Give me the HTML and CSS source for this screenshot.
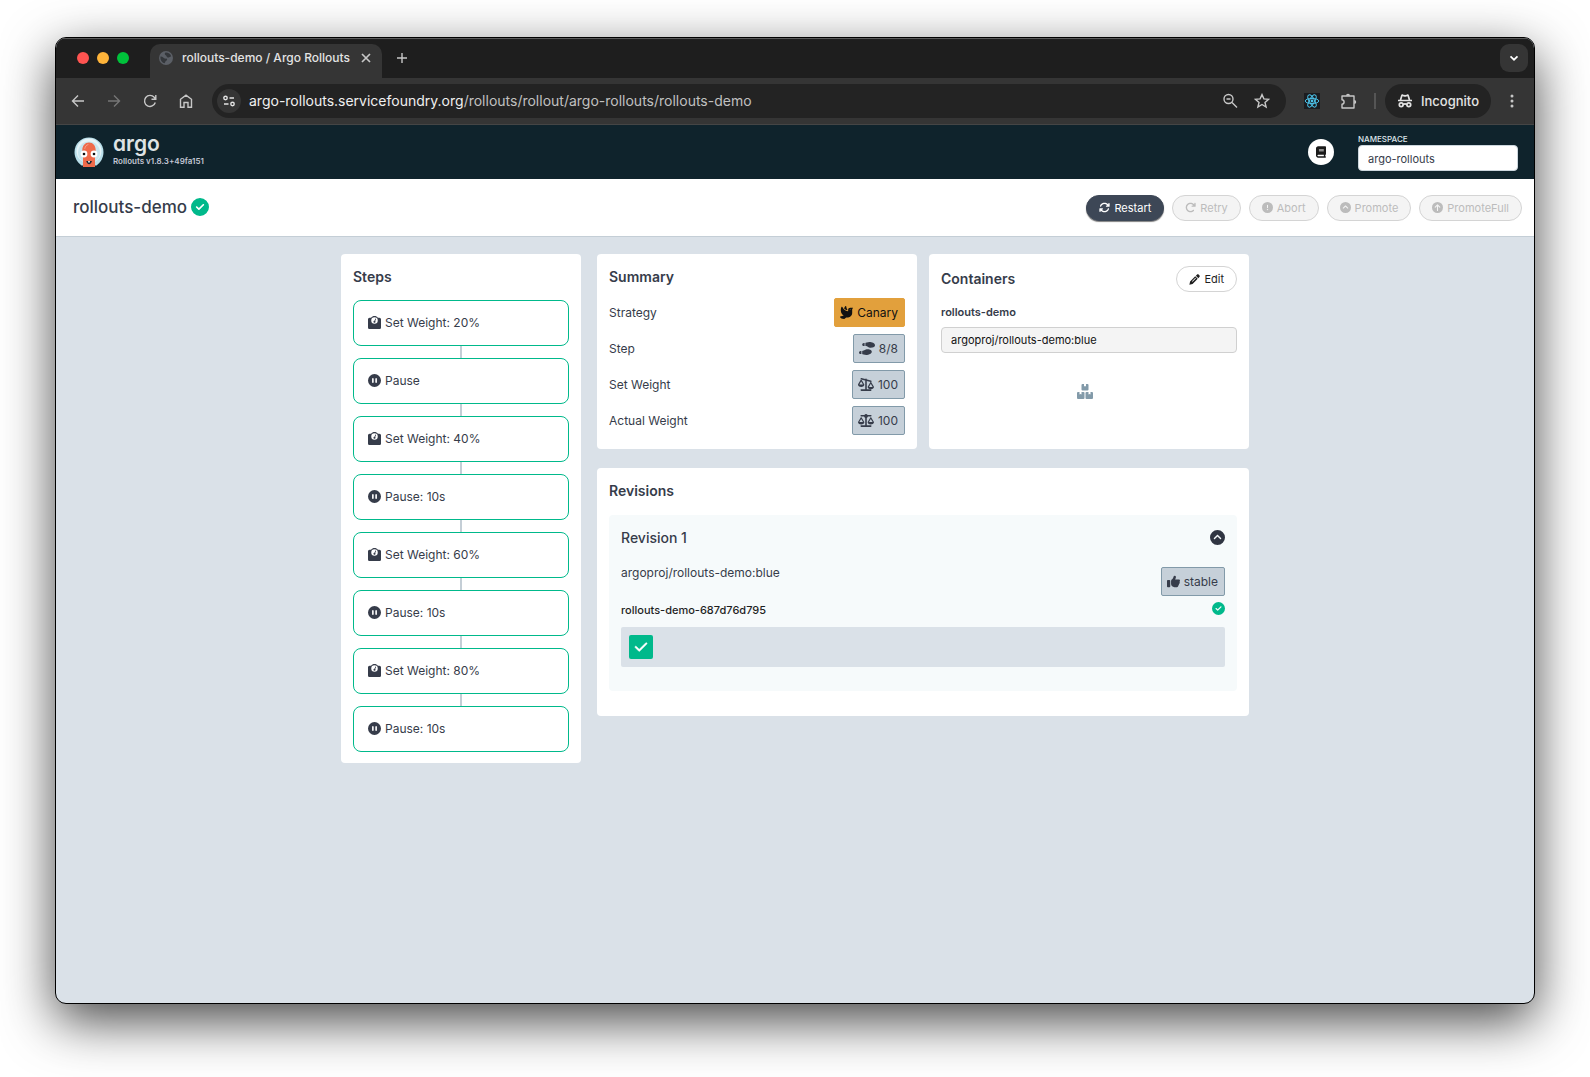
FILE: index.html
```html
<!DOCTYPE html>
<html lang="en">
<head>
    <meta charset="UTF-8">
    <meta name="viewport" content="width=device-width, initial-scale=1.0">
    <title>rollouts-demo / Argo Rollouts</title>
    <link rel="stylesheet" href="styles.css">
</head>
<body>
    <!-- Shared icons -->
    <svg class="sprite" aria-hidden="true">
        <symbol id="i-check-circle" viewBox="0 0 512 512"><path fill-rule="evenodd" d="M256 512A256 256 0 1 0 256 0a256 256 0 1 0 0 512zM369 209L241 337c-9.4 9.4-24.6 9.4-33.9 0l-64-64c-9.4-9.4-9.4-24.6 0-33.9s24.6-9.4 33.9 0l47 47L335 175c9.4-9.4 24.6-9.4 33.9 0s9.4 24.6 0 33.9z"/></symbol>
        <symbol id="i-weight" viewBox="0 0 512 512"><path fill-rule="evenodd" d="M128 176a128 128 0 1 1 256 0 128 128 0 1 1 -256 0zM391.8 64C359.5 24.9 310.7 0 256 0S152.5 24.9 120.2 64H64C28.7 64 0 92.7 0 128V448c0 35.3 28.7 64 64 64H448c35.3 0 64-28.7 64-64V128c0-35.3-28.7-64-64-64H391.8zM296 224c0-10.6-4.1-20.2-10.9-27.4l33.6-78.3c3.5-8.1-.3-17.5-8.4-21s-17.5 .3-21 8.4L255.7 184c-22 .1-39.7 18-39.7 40c0 22.1 17.9 40 40 40s40-17.9 40-40z"/></symbol>
        <symbol id="i-pause" viewBox="0 0 512 512"><path fill-rule="evenodd" d="M256 512A256 256 0 1 0 256 0a256 256 0 1 0 0 512zM224 192V320c0 17.7-14.3 32-32 32s-32-14.3-32-32V192c0-17.7 14.3-32 32-32s32 14.3 32 32zm128 0V320c0 17.7-14.3 32-32 32s-32-14.3-32-32V192c0-17.7 14.3-32 32-32s32 14.3 32 32z"/></symbol>
        <symbol id="i-chevron-circle" viewBox="0 0 512 512"><path fill-rule="evenodd" d="M256 0a256 256 0 1 0 0 512A256 256 0 1 0 256 0zM377 271c9.4 9.4 9.4 24.6 0 33.9s-24.6 9.4-33.9 0l-87-87-87 87c-9.4 9.4-24.6 9.4-33.9 0s-9.4-24.6 0-33.9L239 167c9.4-9.4 24.6-9.4 33.9 0L377 271z"/></symbol>
    </svg>

    <div class="window">
        <div class="tabstrip">
            <div class="lights">
                <span class="light red"></span>
                <span class="light yellow"></span>
                <span class="light green"></span>
            </div>
            <div class="tab">
                <svg class="favicon" viewBox="0 0 14 14"><circle cx="7" cy="7" r="7" fill="#5b5f66"/><path d="M1.500 5.500C4 5.200 4.500 8 7 7.600c1.500-.2 1.500 1.800.2 2.200-1 .4-.8 1.700-1.600 2.400C3 11.600 1 9 1.500 5.500zM6.500 1.600c2.300-.3 5 1.100 5.700 3.600-1.500.8-2.600 1.700-4 1-1-.6-.2-1.500-1.500-1.900-1-.5-1.400-1.900-.2-2.700z" fill="#34373b"/></svg>
                <span class="tab-title">rollouts-demo / Argo Rollouts</span>
                <button class="chrome-btn" aria-label="Close tab"><svg width="10" height="10" viewBox="0 0 10 10"><path d="M1 1l8 8M9 1l-8 8" class="line bold"/></svg></button>
            </div>
            <button class="chrome-btn new-tab" aria-label="New tab"><svg width="12" height="12" viewBox="0 0 12 12"><path d="M6 1v10M1 6h10" class="line"/></svg></button>
            <button class="chrome-btn tab-search" aria-label="Search tabs"><svg width="10" height="10" viewBox="0 0 10 10"><path d="M1.500 3.300L5 6.700l3.500-3.400" class="line bold"/></svg></button>
        </div>

        <div class="toolbar">
            <div class="nav-btns">
                <button class="chrome-btn" aria-label="Back"><svg width="14" height="14" viewBox="0 0 14 14"><path d="M13 7H2M7 1.500L1.500 7 7 12.500" class="line"/></svg></button>
                <button class="chrome-btn dim" aria-label="Forward"><svg width="14" height="14" viewBox="0 0 14 14"><path d="M1 7h11M7 1.500L12.500 7 7 12.500" class="line"/></svg></button>
                <button class="chrome-btn" aria-label="Reload"><svg width="14" height="14" viewBox="0 0 14 14"><path d="M12.300 8.500A5.500 5.500 0 1 1 11.200 3.300L12.600 5M12.800 1v4.300H8.500" class="line"/></svg></button>
                <button class="chrome-btn" aria-label="Home"><svg width="14" height="14" viewBox="0 0 14 14"><path d="M1.500 13.200V5.300L7 1.100l5.500 4.200v7.900H9V8.500H5v4.700z" class="line"/></svg></button>
            </div>
            <div class="omnibox">
                <button class="chrome-btn site-info" aria-label="Site information"><svg width="14" height="12" viewBox="0 0 14 12"><circle cx="3.500" cy="3" r="1.700" class="line"/><path d="M7.500 3H12M2 9h4.500" class="line"/><circle cx="10.500" cy="9" r="1.700" class="line"/></svg></button>
                <div class="url"><span class="host">argo-rollouts.servicefoundry.org</span>/rollouts/rollout/argo-rollouts/rollouts-demo</div>
                <button class="chrome-btn" aria-label="Zoom"><svg width="16" height="16" viewBox="0 0 16 16"><circle cx="6.500" cy="6" r="4.500" class="line"/><path d="M4.500 6h4M10 9.500l5 5" class="line"/></svg></button>
                <button class="chrome-btn" aria-label="Bookmark"><svg width="16" height="16" viewBox="0 0 16 16"><path d="M8 1.600l1.900 4.300 4.700.4-3.600 3.100 1.100 4.600L8 11.500 3.900 14 5 9.400 1.400 6.300l4.700-.4z" class="line"/></svg></button>
            </div>
            <div class="extensions">
                <button class="chrome-btn react" aria-label="React Developer Tools"><svg width="16" height="16" viewBox="0 0 16 16"><rect width="16" height="16" fill="#1b1c20"/><g fill="none" stroke="#4cc3ea"><ellipse cx="8" cy="8" rx="6.800" ry="2.600"/><ellipse cx="8" cy="8" rx="6.800" ry="2.600" transform="rotate(60 8 8)"/><ellipse cx="8" cy="8" rx="6.800" ry="2.600" transform="rotate(120 8 8)"/></g><circle cx="8" cy="8" r="1.400" fill="#4cc3ea"/></svg></button>
                <button class="chrome-btn" aria-label="Extensions"><svg width="17" height="17" viewBox="0 0 17 17"><path d="M2 3H14V15H2V11.300C4.800 11 4.800 7 2 6.700z" class="line" stroke-linejoin="round"/><path d="M6 2.800a2 2 0 0 1 4 0zM14.200 7a2 2 0 0 1 0 4z"/></svg></button>
                <span class="divider"></span>
            </div>
            <button class="incognito"><svg width="16" height="14" viewBox="0 0 16 14"><path d="M3.500 6l1.300-4.300c.2-.6.6-.7 1-.5l1 .4c.8.3 1.600.3 2.400 0l1-.4c.4-.2.800-.1 1 .5L12.500 6M1 6.500h14M6 10.500c1.300-.7 2.700-.7 4 0" class="line bold"/><circle cx="4.200" cy="10.800" r="1.900" class="line bold"/><circle cx="11.800" cy="10.800" r="1.900" class="line bold"/></svg>Incognito</button>
            <button class="chrome-btn menu" aria-label="Menu"><svg width="4" height="14" viewBox="0 0 4 14" fill="#c7c7c7"><circle cx="2" cy="2" r="1.500"/><circle cx="2" cy="7" r="1.500"/><circle cx="2" cy="12" r="1.500"/></svg></button>
        </div>

        <header class="header">
            <a class="brand" href="#">
                <svg class="logo" width="30" height="30" viewBox="0 0 30 30">
                    <path d="M15 .5C23 .5 29.500 6.800 29.500 15c0 6-3 10.500-7 13.500H7.500C3.500 25.500.5 21 .5 15 .5 6.800 7 .5 15 .5z" fill="#b9dfea"/>
                    <circle cx="15" cy="14" r="12.500" fill="#e6f4f8"/>
                    <circle cx="15" cy="15.500" r="11" fill="#c8e6ef"/>
                    <path d="M8.300 13.500C8.300 8.700 11 5.500 15 5.500s6.700 3.200 6.700 8c0 3-.7 5-.7 8V30H9v-8.500c0-3-.7-5-.7-8z" fill="#ef6b4b"/>
                    <path d="M10.800 11.500c.4-2.200 1.600-3.600 3.200-3.900" stroke="#f6a08a" stroke-linecap="round" fill="none"/>
                    <circle cx="10" cy="17" r="3.400" fill="#fff"/><circle cx="20" cy="17" r="3.400" fill="#fff"/>
                    <circle cx="10" cy="17" r="1.300" fill="#111"/><circle cx="20" cy="17" r="1.300" fill="#111"/>
                    <path d="M12.200 24c1.600 4.400 4.200 4.400 5.800 0z" fill="#1c2733"/>
                    <path d="M14.200 24h1.600v1.500h-1.600z" fill="#fff"/>
                </svg>
                <span class="brand-text">
                    <span class="wordmark">argo</span>
                    <span class="version">Rollouts v1.8.3+49fa151</span>
                </span>
            </a>
            <div class="header-right">
                <button class="docs" aria-label="Documentation"><svg width="10" height="12" viewBox="0 0 448 512"><path fill-rule="evenodd" d="M96 0C43 0 0 43 0 96V416c0 53 43 96 96 96H384h32c17.700 0 32-14.300 32-32s-14.300-32-32-32V384c17.700 0 32-14.300 32-32V32c0-17.700-14.300-32-32-32H384 96zm0 384H352v64H96c-17.700 0-32-14.300-32-32s14.300-32 32-32zm32-240c0-8.800 7.200-16 16-16H336c8.800 0 16 7.200 16 16s-7.200 16-16 16H144c-8.800 0-16-7.200-16-16zm16 48H336c8.800 0 16 7.200 16 16s-7.200 16-16 16H144c-8.800 0-16-7.200-16-16s7.200-16 16-16z"/></svg></button>
                <div class="namespace">
                    <label for="namespace">NAMESPACE</label>
                    <input id="namespace" type="text" value="argo-rollouts">
                </div>
            </div>
        </header>

        <div class="subheader">
            <h1>rollouts-demo <svg class="ok" width="18" height="18"><use href="#i-check-circle"/></svg></h1>
            <div class="actions">
                <button class="action primary"><svg width="11" height="11" viewBox="0 0 512 512"><path d="M105.100 202.600c7.700-21.800 20.200-42.300 37.800-59.800c62.500-62.500 163.800-62.500 226.300 0L386.300 160H352c-17.700 0-32 14.300-32 32s14.300 32 32 32H463.900c17.700 0 32-14.300 32-32V80c0-17.700-14.300-32-32-32s-32 14.300-32 32v35.200L414.400 97.600c-87.500-87.500-229.300-87.500-316.800 0C73.200 122 55.600 150.700 44.800 181.400c-5.900 16.700 2.900 34.900 19.500 40.800s34.900-2.900 40.800-19.500zM39 289.300c-5 1.500-9.800 4.200-13.700 8.200c-4 4-6.700 8.800-8.100 14c-.8 3-1.200 6-1.200 8.900V432c0 17.700 14.300 32 32 32s32-14.300 32-32V396.900l17.600 17.500c87.500 87.400 229.300 87.400 316.700 0c24.400-24.400 42.100-53.100 52.900-83.700c5.900-16.700-2.900-34.900-19.500-40.800s-34.900 2.900-40.800 19.500c-7.700 21.800-20.200 42.300-37.800 59.800c-62.500 62.500-163.800 62.500-226.300 0L125.600 352H160c17.700 0 32-14.300 32-32s-14.300-32-32-32H48.400c-3 0-6 .3-9.400 1.300z"/></svg>Restart</button>
                <button class="action" disabled><svg width="11" height="11" viewBox="0 0 512 512"><path d="M386.300 160H336c-17.700 0-32 14.300-32 32s14.300 32 32 32H464c17.700 0 32-14.300 32-32V64c0-17.700-14.300-32-32-32s-32 14.300-32 32v51.200L414.400 97.600c-87.500-87.500-229.300-87.500-316.800 0s-87.500 229.300 0 316.800s229.300 87.500 316.800 0c12.500-12.500 12.500-32.800 0-45.300s-32.800-12.500-45.300 0c-62.500 62.500-163.800 62.500-226.300 0s-62.500-163.800 0-226.300s163.800-62.500 226.300 0L386.300 160z"/></svg>Retry</button>
                <button class="action" disabled><svg width="11" height="11" viewBox="0 0 512 512"><path fill-rule="evenodd" d="M256 512A256 256 0 1 0 256 0a256 256 0 1 0 0 512zm0-384c13.300 0 24 10.700 24 24V264c0 13.300-10.700 24-24 24s-24-10.700-24-24V152c0-13.300 10.700-24 24-24zM224 352a32 32 0 1 1 64 0 32 32 0 1 1 -64 0z"/></svg>Abort</button>
                <button class="action" disabled><svg width="11" height="11"><use href="#i-chevron-circle"/></svg>Promote</button>
                <button class="action" disabled><svg width="11" height="11" viewBox="0 0 512 512"><circle cx="256" cy="256" r="256"/><path d="M256 390V140M150 240l106-106 106 106" fill="none" stroke="#f4f4f4" stroke-width="50" stroke-linecap="round" stroke-linejoin="round"/></svg>PromoteFull</button>
            </div>
        </div>

        <main class="content">
            <section class="card steps">
                <h2>Steps</h2>
                <ol class="step-list">
                    <li class="step"><svg class="icon"><use href="#i-weight"/></svg>Set Weight: 20%</li>
                    <li class="step"><svg class="icon"><use href="#i-pause"/></svg>Pause</li>
                    <li class="step"><svg class="icon"><use href="#i-weight"/></svg>Set Weight: 40%</li>
                    <li class="step"><svg class="icon"><use href="#i-pause"/></svg>Pause: 10s</li>
                    <li class="step"><svg class="icon"><use href="#i-weight"/></svg>Set Weight: 60%</li>
                    <li class="step"><svg class="icon"><use href="#i-pause"/></svg>Pause: 10s</li>
                    <li class="step"><svg class="icon"><use href="#i-weight"/></svg>Set Weight: 80%</li>
                    <li class="step"><svg class="icon"><use href="#i-pause"/></svg>Pause: 10s</li>
                </ol>
            </section>

            <div class="main-col">
                <div class="top-row">
                    <section class="card summary">
                        <h2>Summary</h2>
                        <dl class="info">
                            <div class="info-row">
                                <dt>Strategy</dt>
                                <dd class="badge canary"><svg width="13" height="13" viewBox="0 0 512 512"><path fill-rule="evenodd" d="M160.800 96.500c14 17 31 30.900 49.500 42.200c25.900 15.800 53.700 25.900 77.700 31.600V138.800C265.800 108.500 250 71.500 248.600 28c-.4-11.300-7.500-21.500-18.400-24.400c-7.600-2-15.800-.2-21 5.800c-13.300 15.400-32.700 44.600-48.400 87.200zM320 144v64c-60.800-5.100-185-43.800-219.300-157.200C97.400 40 87.900 32 76.600 32c-7.900 0-15.300 3.900-18.800 11C46.800 65.900 32 112.100 32 176c0 116.900 80.100 180.500 118.400 202.800L11.800 416.600C6.700 418 2.600 421.800 .9 426.800s-.8 10.600 2.300 14.800C21.700 466.200 77.300 512 160 512c3.600 0 7.200-1.200 10-3.500L245.600 448H320c88.400 0 160-71.600 160-160V128l29.900-44.900c1.300-2 2.100-4.400 2.100-6.800c0-6.800-5.500-12.300-12.300-12.300H400c-44.200 0-80 35.800-80 80zm80-16a16 16 0 1 1 0 32 16 16 0 1 1 0-32z"/></svg>Canary</dd>
                            </div>
                            <div class="info-row">
                                <dt>Step</dt>
                                <dd class="badge"><svg width="16" height="13" viewBox="0 0 640 512"><path d="M416 0C352.300 0 256 32 256 32V160c48 0 76 16 104 32s56 32 104 32c56.400 0 176-16 176-96S512 0 416 0zM128 96c0 35.300 28.700 64 64 64h32V32H192c-35.300 0-64 28.700-64 64zM288 512c96 0 224-48 224-128s-119.600-96-176-96c-48 0-76 16-104 32s-56 32-104 32V480s96.300 32 160 32zM0 416c0 35.300 28.700 64 64 64H96V352H64c-35.300 0-64 28.700-64 64z"/></svg>8/8</dd>
                            </div>
                            <div class="info-row">
                                <dt>Set Weight</dt>
                                <dd class="badge"><svg width="16" height="13" viewBox="0 0 640 512"><path d="M320 50V480H512M130 480H320M130 30L512 130" fill="none" stroke="currentColor" stroke-width="62" stroke-linecap="round"/><path fill-rule="evenodd" d="M126.800 132L54.400 256H199.300zM.9 273c-2.600-11 1-22.300 6.700-32.100L102.800 78c5-8.600 14.200-13.800 24.100-13.800s19.100 5.300 24.100 13.800l95.200 163c5.700 9.800 9.300 21.100 6.700 32.100C242 318 189.700 352 126.800 352S11.700 318 .9 273zM512 228l-72.400 124H584.400zM386 369c-2.600-11 1-22.300 6.700-32.100L487.900 174c5-8.600 14.200-13.800 24.100-13.800s19.100 5.300 24.100 13.800l95.200 163c5.700 9.800 9.300 21.100 6.700 32.100C627.200 414 574.900 448 512 448S396.800 414 386 369z"/></svg>100</dd>
                            </div>
                            <div class="info-row">
                                <dt>Actual Weight</dt>
                                <dd class="badge"><svg width="16" height="13" viewBox="0 0 640 512"><path fill-rule="evenodd" d="M384 32H512c17.700 0 32 14.300 32 32s-14.300 32-32 32H398.400c-5.200 25.800-22.900 47.100-46.400 57.300V448H512c17.700 0 32 14.300 32 32s-14.300 32-32 32H128c-17.700 0-32-14.300-32-32s14.300-32 32-32H288V153.300c-23.500-10.300-41.200-31.600-46.400-57.300H128c-17.700 0-32-14.300-32-32s14.300-32 32-32H256c14.600-19.400 37.800-32 64-32s49.400 12.600 64 32zm55.600 288H584.400L512 195.800 439.600 320zM512 416c-62.900 0-115.200-34-126-78.900c-2.600-11 1-22.300 6.700-32.100l95.200-163.200c5-8.600 14.200-13.800 24.100-13.800s19.100 5.300 24.100 13.800l95.200 163.200c5.700 9.800 9.300 21.100 6.700 32.100C627.200 382 574.900 416 512 416zM126.800 195.800L54.400 320H199.300L126.800 195.800zM.9 337.100c-2.600-11 1-22.300 6.700-32.100l95.200-163.200c5-8.600 14.200-13.800 24.100-13.800s19.100 5.300 24.100 13.800l95.200 163.200c5.700 9.800 9.300 21.100 6.700 32.100C242 382 189.700 416 126.800 416S11.700 382 .9 337.100z"/></svg>100</dd>
                            </div>
                        </dl>
                    </section>

                    <section class="card containers">
                        <div class="card-head">
                            <h2>Containers</h2>
                            <button class="action edit"><svg width="11" height="11" viewBox="0 0 12 12"><path fill-rule="evenodd" d="M8.600.7c.6-.6 1.500-.6 2.100 0l.6.6c.6.6.6 1.500 0 2.100l-1.100 1.100-2.700-2.700zM6.800 2.500l2.700 2.700-5.600 5.600L.4 11.700l.8-3.600zM7 4L3.200 7.800l.6.6L7.600 4.600z"/></svg>Edit</button>
                        </div>
                        <label class="container-name" for="image">rollouts-demo</label>
                        <input id="image" class="image" type="text" value="argoproj/rollouts-demo:blue" readonly>
                        <div class="drop">
                            <svg width="16" height="15" viewBox="0 0 16 15"><path d="M5.500 0H7v2.500l1-.6 1 .6V0h1.500q1 0 1 1v4.500q0 1-1 1h-5q-1 0-1-1V1q0-1 1-1zM1 8h1.500v2.500l1-.6 1 .6V8H6.500q1 0 1 1v5q0 1-1 1H1q-1 0-1-1V9q0-1 1-1zM9.500 8h2v2.500l1-.6 1 .6V8H15q1 0 1 1v5q0 1-1 1H9.500q-1 0-1-1V9q0-1 1-1z"/></svg>
                        </div>
                    </section>
                </div>

                <section class="card revisions">
                    <h2>Revisions</h2>
                    <div class="revision">
                        <div class="revision-head">
                            <h3>Revision 1</h3>
                            <button class="toggle" aria-label="Collapse revision"><svg width="15" height="15"><use href="#i-chevron-circle"/></svg></button>
                        </div>
                        <div class="revision-image">
                            <span>argoproj/rollouts-demo:blue</span>
                            <span class="badge"><svg width="13" height="13" viewBox="0 0 512 512"><path d="M313.400 32.900c26 5.200 42.900 30.500 37.700 56.500l-2.300 11.400c-5.300 26.700-15.100 52.100-28.800 75.200H464c26.500 0 48 21.500 48 48c0 18.500-10.500 34.600-25.900 42.600C497 275.400 504 288.900 504 304c0 23.400-16.800 42.900-38.900 47.100c4.400 7.300 6.900 15.800 6.900 24.900c0 21.300-13.900 39.400-33.100 45.600c.7 3.300 1.100 6.800 1.100 10.400c0 26.500-21.500 48-48 48H294.500c-19 0-37.500-5.600-53.300-16.100l-38.500-25.700C176 420.400 160 390.400 160 358.300V247.100c0-29.200 13.300-56.700 36-75l7.400-5.900c26.500-21.200 44.600-51 51.200-84.200l2.300-11.400c5.200-26 30.500-42.900 56.500-37.700zM32 192H96c17.700 0 32 14.300 32 32V448c0 17.700-14.300 32-32 32H32c-17.700 0-32-14.300-32-32V224c0-17.700 14.300-32 32-32z"/></svg>stable</span>
                        </div>
                        <div class="replicaset">
                            <span>rollouts-demo-687d76d795</span>
                            <svg class="ok" width="13" height="13"><use href="#i-check-circle"/></svg>
                        </div>
                        <div class="pods">
                            <span class="pod"><svg width="14" height="14" viewBox="0 0 448 512"><path d="M438.600 105.400c12.500 12.500 12.500 32.800 0 45.300l-256 256c-12.500 12.500-32.800 12.500-45.300 0l-128-128c-12.500-12.500-12.500-32.800 0-45.300s32.800-12.500 45.300 0L160 338.700 393.400 105.400c12.500-12.500 32.800-12.500 45.300 0z" stroke="currentColor" stroke-width="16"/></svg></span>
                        </div>
                    </div>
                </section>
            </div>
        </main>
    </div>
</body>
</html>
```
FILE: styles.css
```css
* {
    margin: 0;
    padding: 0;
    box-sizing: border-box;
}

body {
    font-family: Inter, 'Liberation Sans', sans-serif;
    font-size: 12px;
    color: #363c4a;
    background: #fff;
    min-height: 100vh;
    padding: 37px 55px 73px;
    display: flex;
    overflow: hidden;
}

button,
input {
    font-family: inherit;
}

button {
    border: none;
    background: none;
    cursor: pointer;
}

svg {
    display: block;
    flex: none;
    fill: currentColor;
}

.sprite {
    display: none;
}

/* Browser window */
.window {
    flex: 1;
    display: flex;
    flex-direction: column;
    border: 1px solid #000;
    border-radius: 11px;
    overflow: hidden;
    background: #dae1e8;
    box-shadow: 0 17px 52px rgba(0, 0, 0, 0.72);
}

.line {
    fill: none;
    stroke: currentColor;
    stroke-width: 1.4;
}

.line.bold {
    stroke-width: 1.7;
}

.chrome-btn {
    display: flex;
    align-items: center;
    justify-content: center;
    color: #c7c7c7;
}

.chrome-btn.dim {
    color: #767676;
}

.tabstrip {
    display: flex;
    align-items: center;
    height: 40px;
    background: #1e1e1e;
    border-top: 1px solid #5a5a5a;
    padding: 0 6px 1px 0;
}

.lights {
    display: flex;
    gap: 8px;
    padding: 0 21px;
}

.light {
    width: 12px;
    height: 12px;
    border-radius: 50%;
}

.red {
    background: #ff5451;
}

.yellow {
    background: #ffb43a;
}

.green {
    background: #00c23b;
}

.tab {
    display: flex;
    align-items: center;
    align-self: flex-end;
    width: 232px;
    height: 34px;
    margin-bottom: -1px;
    padding: 0 11px 7px 9px;
    background: #353535;
    border-radius: 10px 10px 0 0;
}

.favicon {
    width: 14px;
    height: 14px;
}

.tab-title {
    flex: 1;
    margin-left: 9px;
    font-size: 12px;
    font-weight: 500;
    color: #e3e3e3;
    white-space: nowrap;
}

.new-tab {
    margin-left: 14px;
}

.tab-search {
    width: 28px;
    height: 28px;
    margin-left: auto;
    border-radius: 9px;
    background: #353535;
    color: #fff;
}

.toolbar {
    display: flex;
    align-items: center;
    height: 47px;
    padding: 0 20px 0 15px;
    background: #353535;
    border-bottom: 1px solid #454545;
}

.nav-btns {
    display: flex;
    gap: 22px;
    margin-right: 19px;
}

.omnibox {
    flex: 1;
    display: flex;
    align-items: center;
    gap: 16px;
    height: 34px;
    padding: 0 16px 0 5px;
    border-radius: 17px;
    background: #232323;
}

.site-info {
    width: 24px;
    height: 24px;
    border-radius: 50%;
    background: #353535;
    color: #e3e3e3;
}

.url {
    flex: 1;
    margin-left: -8px;
    padding-bottom: 1px;
    font-size: 14px;
    color: #c0c0c0;
    white-space: nowrap;
}

.host {
    color: #f0f0f0;
}

.extensions {
    display: flex;
    align-items: center;
    gap: 20px;
    margin: 0 9px 0 18px;
}

.divider {
    width: 2px;
    height: 16px;
    margin-left: -3px;
    background: #555;
}

.incognito {
    display: flex;
    align-items: center;
    gap: 8px;
    height: 34px;
    padding: 0 12px;
    border-radius: 17px;
    background: #232323;
    color: #e3e3e3;
    font-size: 13px;
    font-weight: 500;
}

.menu {
    margin-left: 19px;
}

/* App header */
.header {
    display: flex;
    align-items: center;
    justify-content: space-between;
    height: 54px;
    padding: 0 16px 0 18px;
    background: #0f232c;
}

.brand {
    display: flex;
    align-items: center;
    gap: 9px;
    text-decoration: none;
}

.brand-text {
    display: flex;
    flex-direction: column;
    gap: 2px;
    padding-bottom: 4px;
}

.wordmark {
    font-size: 21px;
    line-height: 20px;
    font-weight: 600;
    font-feature-settings: 'cv11';
    color: #dfe3e5;
}

.version {
    font-size: 8px;
    line-height: 10px;
    font-weight: 600;
    color: #c3c6d4;
}

.header-right {
    display: flex;
    align-items: center;
    gap: 24px;
}

.docs {
    display: flex;
    align-items: center;
    justify-content: center;
    width: 26px;
    height: 26px;
    border-radius: 50%;
    background: #fff;
    color: #1a1a1a;
}

.namespace {
    display: flex;
    flex-direction: column;
    gap: 1px;
    width: 160px;
}

.namespace label {
    font-size: 8px;
    line-height: 10px;
    font-weight: 500;
    color: #dee6eb;
}

.namespace input {
    height: 26px;
    padding: 2px 9px 0;
    border: 1px solid #ccd6dd;
    border-radius: 4px;
    background: #fff;
    font-size: 11px;
    color: #363c4a;
}

.subheader {
    display: flex;
    align-items: center;
    justify-content: space-between;
    height: 58px;
    padding: 0 12px 0 17px;
    background: #fff;
    border-bottom: 1px solid #c4ced6;
}

h1 {
    display: flex;
    align-items: center;
    gap: 4px;
    padding-bottom: 1px;
    font-size: 17px;
    font-weight: 500;
}

.ok {
    color: #00b98b;
}

.actions {
    display: flex;
    gap: 8px;
}

.action {
    display: flex;
    align-items: center;
    gap: 4px;
    height: 26px;
    padding: 0 12px;
    border: 1px solid #d4d4d4;
    border-radius: 13px;
    background: #fff;
    font-size: 11px;
    color: #1f1f1f;
}

.action:disabled {
    background: #f4f4f4;
    color: #bcbcbc;
    cursor: default;
}

.action.primary {
    background: #3d4756;
    border-color: #3d4756;
    color: #fff;
    box-shadow: 0 1px 1px rgba(0, 0, 0, 0.5);
}

/* Rollout */
.content {
    display: flex;
    align-items: flex-start;
    gap: 16px;
    width: 100%;
    max-width: 908px;
    margin: 17px auto;
}

.card {
    padding: 12px;
    border-radius: 4px;
    background: #fff;
}

h2 {
    font-size: 14px;
    line-height: 22px;
    font-weight: 600;
}

.steps {
    width: 240px;
    padding-bottom: 11px;
}

.step-list {
    display: flex;
    flex-direction: column;
    gap: 12px;
    margin-top: 12px;
    list-style: none;
}

.step {
    position: relative;
    display: flex;
    align-items: center;
    gap: 4px;
    height: 46px;
    padding: 0 14px 2px;
    border: 1px solid #00b98b;
    border-radius: 8px;
}

/* connector to the next step */
.step:not(:last-child)::after {
    content: '';
    position: absolute;
    top: 100%;
    left: 50%;
    width: 2px;
    height: 12px;
    margin: 1px 0 0 -1px;
    background: #c4ced6;
}

.icon {
    width: 13px;
    height: 13px;
}

.main-col {
    flex: 1;
    display: flex;
    flex-direction: column;
    gap: 19px;
}

.top-row {
    display: grid;
    grid-template-columns: 1fr 1fr;
    gap: 12px;
}

.info {
    display: flex;
    flex-direction: column;
    gap: 7px;
    margin: 10px 0 2px;
}

.info-row {
    display: flex;
    align-items: center;
    justify-content: space-between;
}

.badge {
    display: flex;
    align-items: center;
    gap: 4px;
    height: 29px;
    padding: 0 6px 0 5px;
    border: 1px solid #829aa9;
    border-radius: 2px;
    background: #c6d0d9;
}

.canary {
    background: #e2a03c;
    border-color: #e2a03c;
    color: #111;
}

.containers {
    display: flex;
    flex-direction: column;
}

.card-head {
    display: flex;
    align-items: center;
    justify-content: space-between;
}

.container-name {
    margin: 12px 0 7px;
    font-size: 11px;
    line-height: 16px;
    font-weight: 600;
}

.image {
    width: 100%;
    height: 26px;
    padding: 0 9px;
    border: 1px solid #d0d0d0;
    border-radius: 4px;
    background: #f4f4f4;
    font-size: 11px;
    color: #111;
}

.drop {
    display: flex;
    justify-content: center;
    padding: 31px 8px 0 0;
    color: #829aa9;
}

.revision {
    margin: 13px 0;
    padding: 12px 12px 24px;
    border-radius: 4px;
    background: #f6fafb;
}

.revision-head {
    display: flex;
    justify-content: space-between;
}

h3 {
    font-size: 14px;
    line-height: 22px;
    font-weight: 500;
}

.toggle {
    height: 20px;
    color: #303542;
}

.revision-image {
    display: flex;
    justify-content: space-between;
    margin-top: 18px;
    line-height: 12px;
}

.replicaset {
    display: flex;
    justify-content: space-between;
    margin: 6px 0 9px;
    font-size: 11px;
    line-height: 16px;
    font-weight: 500;
    color: #1f1f1f;
}

.pods {
    display: flex;
    height: 40px;
    padding: 8px;
    border-radius: 2px;
    background: #dae1e8;
}

.pod {
    display: flex;
    align-items: center;
    justify-content: center;
    width: 24px;
    height: 24px;
    border-radius: 2px;
    background: #00b98b;
    color: #fff;
}
```
